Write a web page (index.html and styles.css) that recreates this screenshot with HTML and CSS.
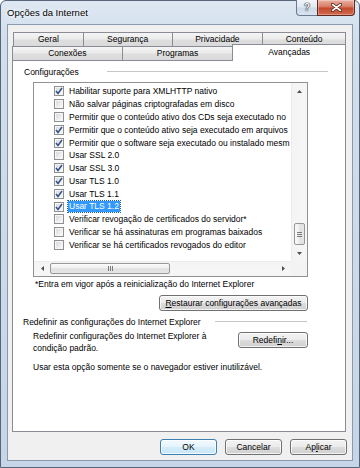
FILE: index.html
```html
<!DOCTYPE html>
<html lang="pt-BR">
<head>
  <meta charset="UTF-8" />
  <meta name="viewport" content="width=device-width, initial-scale=1.0"/>
  <title>Opções da Internet</title>
  <link rel="stylesheet" href="styles.css">
</head>
<body>

  <div class="window">
    <div class="titlebar">
      <span class="title">Opções da Internet</span>
      <div class="caption-btns">
        <div class="cap help">?</div>
        <div class="cap close">
          <svg width="11" height="9" viewBox="0 0 11 9">
            <path d="M1.5 1.5 L9.5 7.5 M9.5 1.5 L1.5 7.5" stroke="#4a1d15" stroke-width="3.2" stroke-linecap="round"/>
            <path d="M1.5 1.5 L9.5 7.5 M9.5 1.5 L1.5 7.5" stroke="#fff" stroke-width="1.6" stroke-linecap="round"/>
          </svg>
        </div>
      </div>
    </div>

    <div class="client">
      <div class="tab-row back">
        <div class="tab t-geral">Geral</div>
        <div class="tab t-seg">Segurança</div>
        <div class="tab t-priv">Privacidade</div>
        <div class="tab t-cont">Conteúdo</div>
      </div>
      <div class="tab-row front">
        <div class="tab t-con">Conexões</div>
        <div class="tab t-prog">Programas</div>
        <div class="tab t-av active">Avançadas</div>
      </div>

      <div class="panel">
        <div class="group-head first">
          <span>Configurações</span>
          <span class="rule"></span>
        </div>

        <div class="listbox">
          <div class="items">
            <div class="item"><span class="box on"><svg width="8" height="8" viewBox="0 0 8 8"><path d="M1 4 L3 6.5 L7 1" fill="none" stroke="#34508a" stroke-width="1.5"/></svg></span>Habilitar suporte para XMLHTTP nativo</div>
            <div class="item"><span class="box"></span>Não salvar páginas criptografadas em disco</div>
            <div class="item"><span class="box"></span>Permitir que o conteúdo ativo dos CDs seja executado no</div>
            <div class="item"><span class="box on"><svg width="8" height="8" viewBox="0 0 8 8"><path d="M1 4 L3 6.5 L7 1" fill="none" stroke="#34508a" stroke-width="1.5"/></svg></span>Permitir que o conteúdo ativo seja executado em arquivos</div>
            <div class="item"><span class="box on"><svg width="8" height="8" viewBox="0 0 8 8"><path d="M1 4 L3 6.5 L7 1" fill="none" stroke="#34508a" stroke-width="1.5"/></svg></span>Permitir que o software seja executado ou instalado mesm</div>
            <div class="item"><span class="box"></span>Usar SSL 2.0</div>
            <div class="item"><span class="box on"><svg width="8" height="8" viewBox="0 0 8 8"><path d="M1 4 L3 6.5 L7 1" fill="none" stroke="#34508a" stroke-width="1.5"/></svg></span>Usar SSL 3.0</div>
            <div class="item"><span class="box on"><svg width="8" height="8" viewBox="0 0 8 8"><path d="M1 4 L3 6.5 L7 1" fill="none" stroke="#34508a" stroke-width="1.5"/></svg></span>Usar TLS 1.0</div>
            <div class="item"><span class="box on"><svg width="8" height="8" viewBox="0 0 8 8"><path d="M1 4 L3 6.5 L7 1" fill="none" stroke="#34508a" stroke-width="1.5"/></svg></span>Usar TLS 1.1</div>
            <div class="item"><span class="box on"><svg width="8" height="8" viewBox="0 0 8 8"><path d="M1 4 L3 6.5 L7 1" fill="none" stroke="#34508a" stroke-width="1.5"/></svg></span><span class="sel">Usar TLS 1.2</span></div>
            <div class="item"><span class="box"></span>Verificar revogação de certificados do servidor*</div>
            <div class="item"><span class="box"></span>Verificar se há assinaturas em programas baixados</div>
            <div class="item"><span class="box"></span>Verificar se há certificados revogados do editor</div>
          </div>

          <div class="vscroll">
            <div class="arrow"><svg width="5" height="3" viewBox="0 0 5 3"><polygon points="0,3 2.5,0 5,3" fill="#4d4d4d"/></svg></div>
            <div class="track v">
              <div class="thumb v">
                <svg width="5" height="5" viewBox="0 0 5 5"><path d="M0 0.5 H5 M0 2.5 H5 M0 4.5 H5" stroke="#7b7b7b" stroke-width="1"/></svg>
              </div>
            </div>
            <div class="arrow"><svg width="5" height="3" viewBox="0 0 5 3"><polygon points="0,0 2.5,3 5,0" fill="#4d4d4d"/></svg></div>
          </div>

          <div class="hscroll">
            <div class="arrow"><svg width="3" height="5" viewBox="0 0 3 5"><polygon points="3,0 0,2.5 3,5" fill="#4d4d4d"/></svg></div>
            <div class="track h">
              <div class="thumb h">
                <svg width="5" height="5" viewBox="0 0 5 5"><path d="M0.5 0 V5 M2.5 0 V5 M4.5 0 V5" stroke="#7b7b7b" stroke-width="1"/></svg>
              </div>
            </div>
            <div class="arrow"><svg width="3" height="5" viewBox="0 0 3 5"><polygon points="0,0 3,2.5 0,5" fill="#4d4d4d"/></svg></div>
          </div>

          <div class="corner"></div>
        </div>

        <p class="note">*Entra em vigor após a reinicialização do Internet Explorer</p>
        <button class="btn restore"><span><u>R</u>estaurar configurações avançadas</span></button>

        <div class="group-head second">
          <span>Redefinir as configurações do Internet Explorer</span>
          <span class="rule"></span>
        </div>

        <div class="reset-row">
          <p>Redefinir configurações do Internet Explorer à<br>condição padrão.</p>
          <button class="btn reset">Redefi<u>n</u>ir...</button>
        </div>

        <p class="hint">Usar esta opção somente se o navegador estiver inutilizável.</p>
      </div>

      <div class="footer">
        <button class="btn default">OK</button>
        <button class="btn">Cancelar</button>
        <button class="btn">Ap<u>l</u>icar</button>
      </div>
    </div>
  </div>

</body>
</html>
```

FILE: styles.css
```css
* {
  margin: 0; padding: 0; box-sizing: border-box;
}
body {
  font-family: "Liberation Sans", Arial, sans-serif;
  font-size: 8.5px;
  color: #000;
  background: #fff;
}
.window {
  width: 360px;
  height: 468px;
  display: flex;
  flex-direction: column;
  padding: 0 6px 6px;
  border: 1px solid #56657a;
  border-radius: 6px 6px 0 0;
  background: linear-gradient(180deg, #dde8f3 0%, #d2deec 8%, #c6d5e7 100%);
}
.titlebar {
  height: 23px;
  display: flex;
  align-items: flex-start;
  flex: none;
}
.title {
  margin-top: 6px;
  font-size: 9.5px;
  line-height: 12px;
  text-shadow: 0 0 6px #fff, 0 0 3px #fff;
}
.caption-btns {
  display: flex;
  margin: -1px -2px 0 auto;
}
.cap {
  height: 16px;
  display: flex;
  align-items: center;
  justify-content: center;
}
.help {
  width: 21px;
  border: 1px solid #6b7a8f;
  border-top: none;
  border-right: none;
  border-radius: 0 0 0 4px;
  background: linear-gradient(180deg, #f1f5fa 0%, #e2e9f2 45%, #cdd9e8 55%, #d9e4f0 100%);
  color: #f4f4f4;
  font-weight: bold;
  font-size: 10px;
  text-shadow: 0 0 1px #2b3440, 0 0 1px #2b3440, 0 0 1px #2b3440;
}
.close {
  width: 38px;
  border: 1px solid #5e2a20;
  border-top: none;
  border-radius: 0 0 4px 0;
  background: linear-gradient(180deg, #eab0a3 0%, #da8069 42%, #c54a2f 55%, #d26a4d 100%);
  box-shadow: inset 0 0 0 1px rgba(255,255,255,0.3);
}
.client {
  flex: 1;
  display: flex;
  flex-direction: column;
  border: 1px solid #8a99ab;
  background: #f0f0f0;
  padding: 7px 6px 5px 4px;
}

/* tabs */
.tab-row {
  display: flex;
  height: 14px;
  flex: none;
  align-items: flex-end;
}
.tab-row.back {
  margin-left: 2px;
}
.tab-row.front {
  margin-left: 1px;
}
.tab {
  height: 14px;
  margin-left: -1px;
  border: 1px solid #898c95;
  border-bottom: none;
  background: linear-gradient(180deg, #f5f5f5 0%, #ebebeb 45%, #dedede 55%, #dadada 100%);
  text-align: center;
  line-height: 13px;
}
.t-geral { width: 71px; }
.t-seg { width: 90px; }
.t-priv { width: 92px; }
.t-cont { width: 84px; }
.t-con { width: 111px; }
.t-prog { width: 112px; }
.t-av { width: 114px; }
.tab.active {
  position: relative;
  z-index: 1;
  height: 17px;
  margin-bottom: -1px;
  background: #fff;
  line-height: 14px;
}
.panel {
  flex: 1;
  display: flex;
  flex-direction: column;
  border: 1px solid #898c95;
  background: #fff;
}
.group-head {
  display: flex;
  align-items: center;
  height: 12px;
  margin-top: 5px;
}
.group-head.first {
  margin-left: 11px;
  width: 304px;
}
.group-head.second {
  margin-left: 10px;
  width: 284px;
}
.rule {
  margin-left: auto;
  height: 2px;
  border-top: 1px solid #c6c6c6;
  border-bottom: 1px solid #fff;
}
.first .rule { width: 221px; }
.second .rule { width: 92px; }

/* listbox */
.listbox {
  margin: 4px 0 0 20px;
  width: 275px;
  height: 195px;
  border: 1px solid #8f9196;
  display: grid;
  grid-template-columns: 257px 16px;
  grid-template-rows: 178px 15px;
}
.items {
  overflow: hidden;
  padding-top: 2px;
}
.item {
  display: flex;
  align-items: center;
  height: 12.8px;
  padding-left: 20px;
  white-space: nowrap;
}
.box {
  flex: none;
  width: 10px;
  height: 10px;
  margin-right: 5px;
  border: 1px solid #8e8f8f;
  background: linear-gradient(135deg, #d3d6dc 0%, #eceef0 60%, #fbfbfb 100%);
  box-shadow: inset 0 0 0 1px #f6f6f6;
  display: flex;
  align-items: center;
  justify-content: center;
}
.sel {
  background: #3399ff;
  color: #fff;
  line-height: 11px;
  padding: 0 1px;
  margin-left: -1px;
  outline: 1px dotted #1f5fa8;
}
.vscroll {
  display: flex;
  flex-direction: column;
  background: linear-gradient(90deg, #e4e4e4 0, #f4f4f4 1px, #f6f6f6 100%);
}
.hscroll {
  display: flex;
  background: linear-gradient(180deg, #e4e4e4 0, #f4f4f4 1px, #f6f6f6 100%);
}
.arrow {
  flex: none;
  width: 16px;
  height: 16px;
  display: flex;
  align-items: center;
  justify-content: center;
}
.hscroll .arrow {
  height: 15px;
}
.track {
  flex: 1;
  display: flex;
}
.track.v {
  flex-direction: column;
  justify-content: flex-end;
}
.thumb {
  border: 1px solid #979797;
  border-radius: 2px;
  display: flex;
  align-items: center;
  justify-content: center;
}
.thumb.v {
  width: 11px;
  height: 22px;
  margin: 0 2px 0 3px;
  background: linear-gradient(90deg, #fbfbfb 0%, #eeeeee 45%, #e0e0e0 55%, #e6e6e6 100%);
}
.thumb.h {
  width: 120px;
  height: 11px;
  margin-top: 2px;
  background: linear-gradient(180deg, #fbfbfb 0%, #eeeeee 45%, #e0e0e0 55%, #e6e6e6 100%);
}
.corner {
  background: #f3f3f3;
}

.note {
  margin: 1px 0 0 22px;
  line-height: 12px;
}
.btn {
  height: 16px;
  border: 1px solid #707070;
  border-radius: 3px;
  background: linear-gradient(180deg, #f3f3f3 0%, #ebebeb 48%, #dddddd 52%, #cfcfcf 100%);
  box-shadow: inset 0 0 0 1px rgba(255,255,255,0.75);
  font: inherit;
  color: #000;
  line-height: 13px;
  padding: 0;
}
.restore {
  align-self: flex-start;
  width: 149px;
  margin: 5px 0 0 146px;
}
.reset-row {
  display: flex;
  margin: 2px 0 0 20px;
  width: 275px;
  line-height: 12px;
}
.reset {
  width: 70px;
  margin: 2px 0 0 auto;
}
.hint {
  margin: 7px 0 0 20px;
  line-height: 12px;
}
.footer {
  flex: none;
  display: flex;
  justify-content: flex-end;
  gap: 8px;
  margin: 7px -1px 0 0;
}
.footer .btn {
  width: 57px;
}
.btn.default {
  border-color: #3c7fb1;
  background: linear-gradient(180deg, #f2f9fe 0%, #e5f4fc 48%, #d4ecfa 52%, #c9e6f8 100%);
}
```
